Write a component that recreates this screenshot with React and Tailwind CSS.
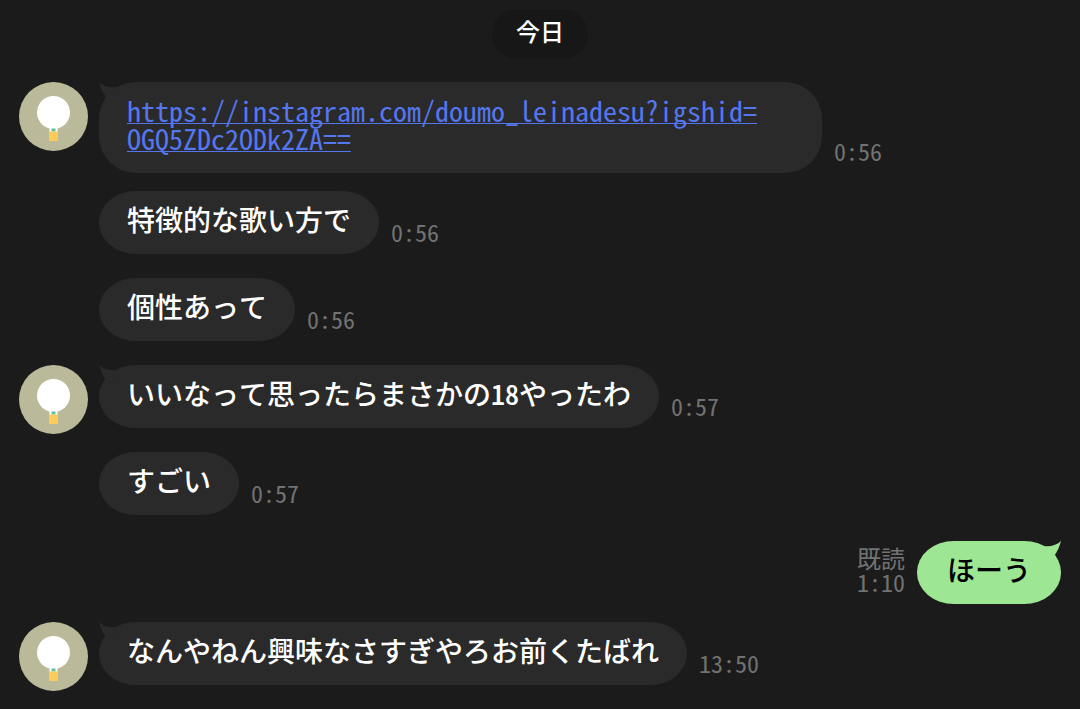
import clsx from 'clsx'

const messages = [
  { id: 1, from: 'friend', avatar: true, time: '0:56', link: ['https://instagram.com/doumo_leinadesu?igshid=', 'OGQ5ZDc2ODk2ZA=='] },
  { id: 2, from: 'friend', time: '0:56', text: '特徴的な歌い方で' },
  { id: 3, from: 'friend', time: '0:56', text: '個性あって' },
  { id: 4, from: 'friend', avatar: true, time: '0:57', text: 'いいなって思ったらまさかの18やったわ' },
  { id: 5, from: 'friend', time: '0:57', text: 'すごい' },
  { id: 6, from: 'me', time: '1:10', text: 'ほーう' },
  { id: 7, from: 'friend', avatar: true, time: '13:50', text: 'なんやねん興味なさすぎやろお前くたばれ' },
]

/* White balloon with a yellow basket */
function Avatar() {
  return (
    <svg viewBox="0 0 69 69" className="w-full rounded-full" role="img" aria-label="avatar">
      <rect width="69" height="69" fill="#bab99a" />
      <circle cx="34.5" cy="30.5" r="16.5" fill="#fff" />
      <rect x="30.5" y="45" width="8" height="5" fill="#fff" />
      <rect x="32.5" y="46.5" width="4" height="3" fill="#5fc0a8" />
      <rect x="30" y="49.5" width="9" height="9.5" fill="#fccb5a" />
    </svg>
  )
}

function Tail({ className }) {
  return (
    <svg viewBox="0 0 24 20" width="24" height="20" className={clsx('absolute top-0', className)} aria-hidden="true">
      <path d="M0 0C4 4 10 6 18 5L20 18L5 18L6.500 14.500C4 11 1.500 6 0 0Z" fill="currentColor" />
    </svg>
  )
}

function LinkMessage({ parts }) {
  return (
    <div className="relative max-w-[723px] rounded-[37px] bg-[#2a2a2a] px-7 pt-3.5 pb-[21px] text-[#5477f0]">
      <Tail className="left-0 text-[#2a2a2a]" />
      <a
        href={parts.join('')}
        className="relative block underline decoration-1 underline-offset-1 [text-decoration-skip-ink:none]"
      >
        {parts[0]}<wbr />{parts[1]}
      </a>
    </div>
  )
}

function FriendMessage({ message }) {
  return (
    <li className="flex min-h-[69px] items-start gap-[11px]">
      <div className="w-[69px] shrink-0">{message.avatar && <Avatar />}</div>
      <div className="flex items-end gap-3">
        {message.link ? (
          <LinkMessage parts={message.link} />
        ) : (
          <div className="relative [border-radius:37px/31px] bg-[#2a2a2a] px-7 pt-3.5 pb-[21px] font-medium text-white">
            {message.avatar && <Tail className="left-0 text-[#2a2a2a]" />}
            <p className="relative">{message.text}</p>
          </div>
        )}
        <time className="pb-2.5 text-2xl leading-6 text-[#727272]">{message.time}</time>
      </div>
    </li>
  )
}

function MyMessage({ message }) {
  return (
    <li className="flex items-end justify-end gap-3 pt-0.5">
      <div className="pb-2.5 text-right text-2xl leading-6 text-[#727272]">
        <p>既読</p>
        <time className="block">{message.time}</time>
      </div>
      <div className="relative [border-radius:37px/31px] bg-[#9de693] px-[30px] pt-3.5 pb-[21px] font-medium text-black">
        <Tail className="right-0 -scale-x-100 text-[#9de693]" />
        <p className="relative">{message.text}</p>
      </div>
    </li>
  )
}

export default function App() {
  return (
    <main
      lang="ja"
      className="min-h-screen bg-[#1b1b1b] px-[19px] pt-[9px] pb-[18px] font-['Noto_Sans_CJK_JP',sans-serif] text-[28px] leading-7 [font-feature-settings:'hwid'] [font-kerning:none]"
    >
      <div className="flex justify-center">
        <h2 className="rounded-full bg-[#171717] px-6 pt-2.5 pb-4 text-2xl leading-6 font-medium text-white">今日</h2>
      </div>
      <ul className="mt-[23px] flex flex-col gap-[18px]">
        {messages.map(message =>
          message.from === 'me'
            ? <MyMessage key={message.id} message={message} />
            : <FriendMessage key={message.id} message={message} />
        )}
      </ul>
    </main>
  )
}
